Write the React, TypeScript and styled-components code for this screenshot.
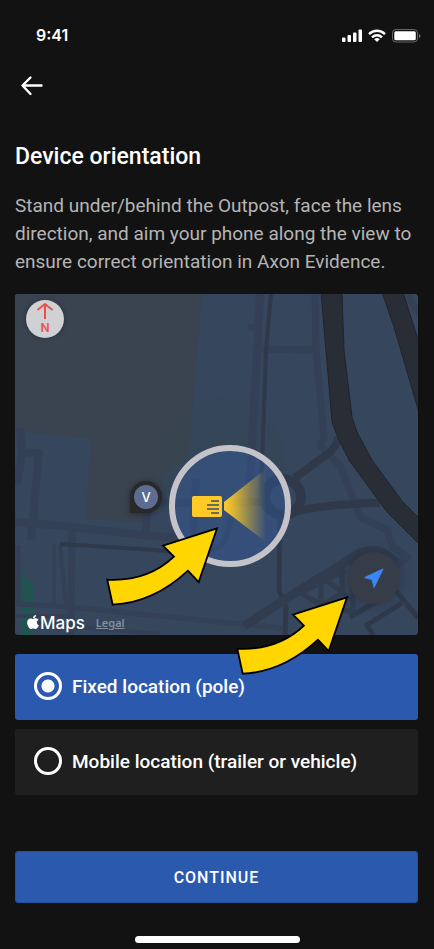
import React, { useState } from "react";
import styled, { createGlobalStyle } from "styled-components";
import { FaApple } from "react-icons/fa";

const GlobalStyle = createGlobalStyle`
  *, *::before, *::after { box-sizing: border-box; }
  body {
    margin: 0;
    background: #121212;
    color: #ffffff;
    font-family: Roboto, "Liberation Sans", sans-serif;
  }
`;

const Screen = styled.div`
  display: flex;
  flex-direction: column;
  min-height: 100vh;
  background: #121212;
`;

const StatusBar = styled.div`
  display: flex;
  align-items: center;
  justify-content: space-between;
  height: 48px;
  padding: 22px 13px 0 36px;
`;

const Time = styled.span`
  font: 600 16px/24px Inter, "Liberation Sans", sans-serif;
`;

const StatusIcons = styled.svg`
  display: block;
  width: 79px;
  height: 16px;
`;

const TopBar = styled.header`
  display: flex;
  align-items: center;
  height: 76px;
  padding: 0 12px;
`;

const BackButton = styled.button`
  display: grid;
  place-items: center;
  width: 40px;
  height: 40px;
  padding: 0;
  border: 0;
  background: none;
  color: inherit;
  cursor: pointer;
`;

const Content = styled.main`
  display: flex;
  flex: 1;
  flex-direction: column;
  padding: 19px 16px 33px 15px;
`;

const Title = styled.h1`
  margin: 0;
  font-size: 23px;
  font-weight: 500;
  line-height: 28px;
`;

const Description = styled.p`
  margin: 21px 0 18px;
  color: #b5b5b5;
  font-size: 19px;
  line-height: 28px;
`;

const MapCard = styled.section`
  position: relative;
  height: 341px;
`;

const MapCanvas = styled.svg`
  display: block;
  width: 100%;
  height: 100%;
  border-radius: 3px;
`;

const Compass = styled.button`
  position: absolute;
  top: 6px;
  left: 11px;
  display: flex;
  flex-direction: column;
  align-items: center;
  width: 38px;
  height: 38px;
  padding: 2px 0 0;
  border: 0;
  border-radius: 50%;
  background: #d0d1d5;
  color: #eb5149;
  font: 600 12px/16px Inter, "Liberation Sans", sans-serif;
  box-shadow: 0 0 5px rgba(0, 0, 0, 0.3);
`;

const VehiclePin = styled.div`
  position: absolute;
  top: 187px;
  left: 115px;
  display: grid;
  place-items: center;
  width: 32px;
  height: 32px;
  border-radius: 50% 50% 50% 0;
  background: #292929;
  box-shadow: 0 1px 6px rgba(0, 0, 0, 0.4);
`;

const PinLabel = styled.span`
  width: 24px;
  height: 24px;
  border-radius: 50%;
  background: #5d6d92;
  font: 500 13px/24px Inter, "Liberation Sans", sans-serif;
  text-align: center;
`;

const LocateButton = styled.button`
  position: absolute;
  right: 18px;
  bottom: 31px;
  display: grid;
  place-items: center;
  width: 52px;
  height: 52px;
  padding: 0;
  border: 0;
  border-radius: 50%;
  background: #373d48;
  box-shadow: 0 0 12px rgba(20, 26, 36, 0.35);
  cursor: pointer;
`;

const Attribution = styled.div`
  position: absolute;
  bottom: 0;
  left: 10px;
  display: flex;
  align-items: center;
  font: 500 17px/24px Inter, "Liberation Sans", sans-serif;
`;

const AppleMark = styled(FaApple)`
  margin: 0 -1px 2px 0;
`;

const LegalLink = styled.a`
  margin-left: 11px;
  color: #848e9e;
  font: 600 11px/16px "Noto Sans", "Liberation Sans", sans-serif;
  text-decoration: underline;
`;

const Pointer = styled.svg<{ $left: number; $top: number }>`
  position: absolute;
  z-index: 1;
  left: ${(p) => p.$left}px;
  top: ${(p) => p.$top}px;
  width: 116px;
  height: 82px;
  pointer-events: none;
`;

const Options = styled.fieldset`
  display: grid;
  gap: 9px;
  min-width: 0;
  margin: 19px 0 56px;
  padding: 0;
  border: 0;
`;

const Option = styled.label<{ $selected: boolean }>`
  display: flex;
  align-items: center;
  gap: 10px;
  min-height: 66px;
  padding: 0 19px 2px;
  border-radius: 3px;
  background: ${(p) => (p.$selected ? "#2b59ae" : "#1f1f1f")};
  font-size: 19px;
  font-weight: 500;
  cursor: pointer;
`;

const Radio = styled.input`
  appearance: none;
  flex: none;
  width: 28px;
  height: 28px;
  margin: 0;
  border: 3px solid #ffffff;
  border-radius: 50%;
  background: transparent;

  &:checked {
    background: radial-gradient(circle, #ffffff 6px, transparent 7px);
  }
`;

const ContinueButton = styled.button`
  height: 52px;
  padding: 2px 16px 0;
  border: 1px solid #244f99;
  border-radius: 3px;
  background: #2b59ae;
  color: #ffffff;
  font: 500 16px/24px Roboto, "Liberation Sans", sans-serif;
  letter-spacing: 1px;
  text-transform: uppercase;
  cursor: pointer;
`;

const HomeIndicator = styled.div`
  align-self: center;
  width: 165px;
  height: 7px;
  margin-bottom: 6px;
  border-radius: 4px;
  background: #ffffff;
`;

function PointerArrow({ left, top }: { left: number; top: number }) {
  return (
    <Pointer $left={left} $top={top} viewBox="0 0 116 82" aria-hidden="true">
      <path
        d="M112 3.3 58 20.7 69 31.7Q42 57 2.3 54.7L7.7 79.7Q48 78 83 45.7L93.7 57Z"
        fill="#ffd600"
        stroke="#000"
        strokeWidth="1.8"
      />
    </Pointer>
  );
}

function MapDrawing() {
  return (
    <MapCanvas viewBox="0 0 403 341" preserveAspectRatio="xMidYMid slice" role="img" aria-label="Map">
      <defs>
        <linearGradient id="beam" x1="0" x2="1" y1="0" y2="0">
          <stop offset="0" stopColor="#ffca28" />
          <stop offset="0.2" stopColor="#ffca28" stopOpacity="0.85" />
          <stop offset="1" stopColor="#ffca28" stopOpacity="0" />
        </linearGradient>
        <radialGradient id="halo">
          <stop offset="0.9" stopColor="#33454f" stopOpacity="0.35" />
          <stop offset="1" stopColor="#33454f" stopOpacity="0" />
        </radialGradient>
      </defs>
      <rect width="403" height="341" fill="#36465d" />
      <path d="M0 0H187L174 160 150 180 131 229 71 224 76 145 10 138 0 136Z" fill="#3a4350" />
      <circle cx="204" cy="170" r="70" fill="url(#halo)" />
      <path d="M6 276 18 291V341H7Z" fill="#22544f" />

      <g fill="none" stroke="#334055" strokeLinejoin="round">
        <path d="M5 134 7 160 2 190M7 159H24L22 180 16 246" strokeWidth="8" />
        <path d="M0 228 38 231 128 241 165 244" strokeWidth="8" />
        <path d="M57 233 56 341" strokeWidth="7" strokeLinecap="round" />
        <path d="M39 250V313M45 252 51 311" strokeWidth="4" />
        <path d="M3 251V310L55 313 195 327 267 334" strokeWidth="5" />
        <path d="M18 329 145 340M0 322H56" strokeWidth="4" />
        <path d="M132 215 131 240M147 209H172L215 213" strokeWidth="8" />
        <path d="M181 185 178 240M245 0 236 171 232 215" strokeWidth="8" />
        <path d="M218 215 211 244Q206 257 186 257" strokeWidth="6" />
        <path d="M236 33H243M243 55 298 56" strokeWidth="7" strokeLinecap="round" />
        <path d="M300 0 301 56 309 143 305 151 326 173 345 223 372 236 378 253 393 263 381 272" strokeWidth="7" />
        <path d="M393 0Q398 13 405 21" strokeWidth="6" />
      </g>
      <g fill="none" stroke="#2f394a" strokeLinejoin="round">
        <path d="M45 250 140 256 180 260" strokeWidth="4" />
        <path d="M256 0 251 56 247 171 246 200" strokeWidth="4" />
        <path d="M323 143Q322 154 311 161L280 184" strokeWidth="8" />
        <circle cx="268" cy="203" r="18" strokeWidth="10" />
        <path d="M278 218Q310 210 365 209M215 208H250" strokeWidth="8" />
        <path d="M265 224 264 296 271 313 270 341" strokeWidth="5" />
        <path d="M335 323 364 306M381 297 403 324M387 309 352 331 358 341" strokeWidth="5" />
      </g>
      <g fill="none" stroke="#313c4f">
        <path d="M229 332 285 296 340 262Q361 249 381 268" strokeWidth="9" />
        <path d="M284 298 312 314 341 318M306 284V310M311 286 337 306M327 272V300M286 299 330 276M338 265V318M307 311 330 298" strokeWidth="5" />
      </g>
      <g fill="#292d36" stroke="#20252d">
        <path d="M306-2 317 128 323 144 334 166 372 218 405 251V225L387 207 357 166 342 138 337 123 329 56 327-2Z" />
        <path d="M367-2 379 33 405 122V52L388-2Z" />
      </g>

      <circle cx="215" cy="212" r="58" fill="#3668be" fillOpacity="0.3" stroke="#c3c3c9" strokeWidth="6" />
      <path d="M209 208 251 175V248L209 216Z" fill="url(#beam)" />
      <rect x="177" y="202" width="30" height="21" rx="2" fill="#ffca28" />
      <path d="M196 207H204M192 211H204M192 215H204M196 219H204" stroke="#3a4f6e" strokeWidth="1.7" />
    </MapCanvas>
  );
}

const OPTIONS = [
  { value: "fixed", label: "Fixed location (pole)" },
  { value: "mobile", label: "Mobile location (trailer or vehicle)" },
];

export default function App() {
  const [location, setLocation] = useState("fixed");

  return (
    <Screen>
      <GlobalStyle />
      <StatusBar>
        <Time>9:41</Time>
        <StatusIcons viewBox="0 0 79 16" fill="#fff" aria-hidden="true">
          <rect x="0" y="10.5" width="3.5" height="4.5" rx="1" />
          <rect x="5.5" y="8" width="3.5" height="7" rx="1" />
          <rect x="11" y="5.5" width="3.5" height="9.5" rx="1" />
          <rect x="16.5" y="2.5" width="3.5" height="12.5" rx="1" />
          <path d="M26.2 6.2A12.6 12.6 0 0 1 43.8 6.2L42.2 8A10.2 10.2 0 0 0 27.8 8Z" />
          <path d="M29.2 9.4A8.3 8.3 0 0 1 40.8 9.4L39.1 11.2A5.9 5.9 0 0 0 30.9 11.2Z" />
          <path d="M32.2 12.2A4.2 4.2 0 0 1 37.8 12.2L35 15Z" />
          <rect x="50.5" y="2.5" width="25" height="12.5" rx="3.5" fill="none" stroke="#fff" strokeOpacity="0.35" />
          <rect x="52.3" y="4.3" width="21.5" height="9" rx="1.5" />
          <path d="M77 7V11Q78.5 10.5 78.5 9 78.5 7.5 77 7Z" fillOpacity="0.4" />
        </StatusIcons>
      </StatusBar>

      <TopBar>
        <BackButton aria-label="Back">
          <svg width="24" height="24" viewBox="0 0 24 24" fill="none" stroke="currentColor" strokeWidth="2.4" strokeLinecap="round" strokeLinejoin="round">
            <path d="M21.5 11.5H3M10.5 3.500 2.5 11.5 10.5 20" />
          </svg>
        </BackButton>
      </TopBar>

      <Content>
        <Title>Device orientation</Title>
        <Description>
          Stand under/behind the Outpost, face the lens direction, and aim your phone along the view to ensure correct
          orientation in Axon Evidence.
        </Description>

        <MapCard>
          <MapDrawing />
          <Compass aria-label="Face north">
            <svg width="18" height="18" viewBox="0 0 18 18" fill="none" stroke="currentColor" strokeWidth="2">
              <path d="M9 17V2M1.5 8 9 2 16.5 8" />
            </svg>
            N
          </Compass>
          <VehiclePin>
            <PinLabel>V</PinLabel>
          </VehiclePin>
          <LocateButton aria-label="Locate me">
            <svg width="22" height="22" viewBox="0 0 22 22" fill="#3b86f2" stroke="#3b86f2" strokeLinejoin="round">
              <path d="M20 2 11 20.5 9 12.5 1.5 10.5Z" />
            </svg>
          </LocateButton>
          <Attribution>
            <AppleMark size={16} aria-hidden="true" />
            Maps
            <LegalLink href="#legal">Legal</LegalLink>
          </Attribution>
          <PointerArrow left={90} top={231} />
          <PointerArrow left={220} top={300} />
        </MapCard>

        <Options aria-label="Location type">
          {OPTIONS.map((option) => (
            <Option key={option.value} $selected={location === option.value}>
              <Radio
                type="radio"
                name="location"
                value={option.value}
                checked={location === option.value}
                onChange={() => setLocation(option.value)}
              />
              {option.label}
            </Option>
          ))}
        </Options>

        <ContinueButton>Continue</ContinueButton>
      </Content>
      <HomeIndicator />
    </Screen>
  );
}
